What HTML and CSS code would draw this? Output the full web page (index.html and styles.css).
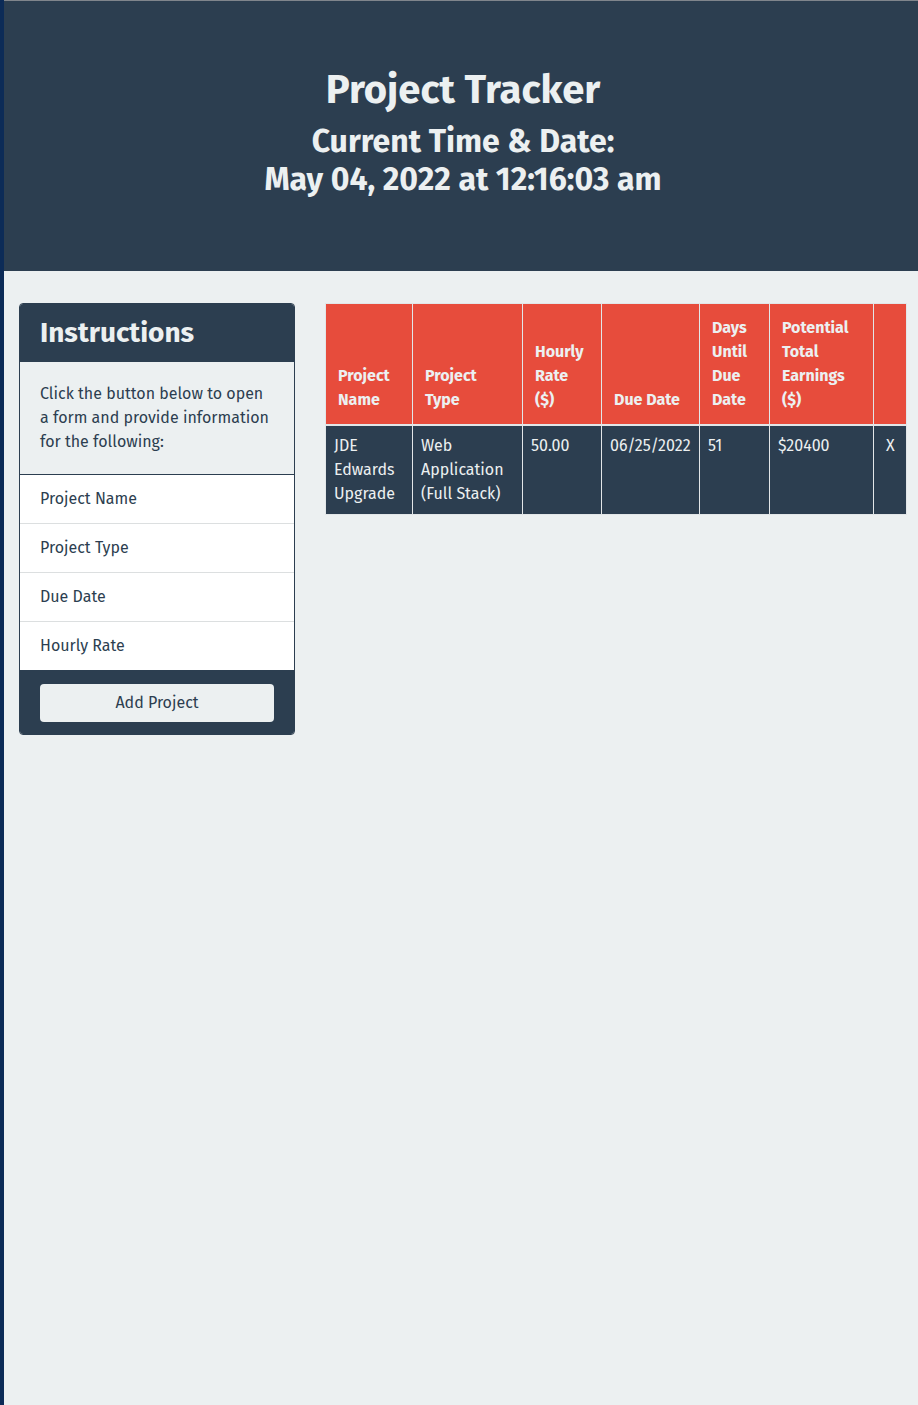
FILE: index.html
```html
<!DOCTYPE html>
<html lang="en">
<head>
<meta charset="utf-8">
<title>Project Tracker</title>
<link rel="stylesheet" href="styles.css">
</head>
<body>
<header class="hero">
  <h1 class="hero-title">Project Tracker</h1>
  <h2 class="hero-sub">Current Time &amp; Date:<br>May 04, 2022 at 12:16:03 am</h2>
</header>
<main class="main">
  <aside class="card">
    <div class="card-header">
      <h3 class="card-title">Instructions</h3>
    </div>
    <div class="card-body">
      <p class="card-text">Click the button below to open a form and provide information for the following:</p>
    </div>
    <ul class="list">
      <li class="list-item">Project Name</li>
      <li class="list-item">Project Type</li>
      <li class="list-item">Due Date</li>
      <li class="list-item">Hourly Rate</li>
    </ul>
    <div class="card-footer">
      <button class="btn" type="button">Add Project</button>
    </div>
  </aside>
  <section class="table-wrap">
    <table class="table">
      <colgroup>
        <col class="c-name">
        <col class="c-type">
        <col class="c-rate">
        <col class="c-due">
        <col class="c-days">
        <col class="c-earn">
        <col class="c-del">
      </colgroup>
      <thead>
        <tr>
          <th>Project Name</th>
          <th>Project Type</th>
          <th>Hourly Rate ($)</th>
          <th>Due Date</th>
          <th>Days Until Due Date</th>
          <th>Potential Total Earnings ($)</th>
          <th></th>
        </tr>
      </thead>
      <tbody>
        <tr>
          <td>JDE Edwards Upgrade</td>
          <td>Web Application (Full Stack)</td>
          <td>50.00</td>
          <td class="nowrap">06/25/2022</td>
          <td>51</td>
          <td>$20400</td>
          <td class="del">X</td>
        </tr>
      </tbody>
    </table>
  </section>
</main>
</body>
</html>
```
FILE: styles.css
```css
* { box-sizing: border-box; }

html { background: #ecf0f1; }

body {
  margin: 0;
  min-height: 1405px;
  background: #ecf0f1;
  border-left: 4px solid #0c2b57;
  font-family: "Fira Sans", Roboto, "Liberation Sans", sans-serif;
  font-size: 16px;
  line-height: 24px;
  color: #2c3e50;
}

.hero {
  background: #2c3e50;
  color: #ecf0f1;
  text-align: center;
  border-top: 1px solid #80858c;
  padding: 65px 32px 64px 36px;
}

.hero-title {
  margin: 0 0 8px;
  font-size: 40px;
  line-height: 1.2;
  font-weight: 700;
}

.hero-sub {
  margin: 0 0 8px;
  font-size: 32px;
  line-height: 1.2;
  font-weight: 700;
}

.main {
  display: flex;
  align-items: flex-start;
  gap: 30px;
  padding: 32px 12px 0 15px;
}

.card {
  flex: 0 0 276px;
  width: 276px;
  border: 1px solid #2c3e50;
  border-radius: 4px;
  overflow: hidden;
  background: #fff;
}

.card-header {
  background: #2c3e50;
  padding: 12px 20px;
  border-bottom: 1px solid #2c3e50;
}

.card-title {
  margin: 0;
  font-size: 28px;
  line-height: 33px;
  font-weight: 700;
  color: #ecf0f1;
}

.card-body {
  background: #ecf0f1;
  padding: 20px;
  border-bottom: 1px solid #2c3e50;
}

.card-text { margin: 0; }

.list {
  list-style: none;
  margin: 0;
  padding: 0;
  background: #fff;
}

.list-item {
  padding: 12px 20px;
  border-bottom: 1px solid #dcdfe0;
}

.list-item:last-child { border-bottom: none; }

.card-footer {
  background: #2c3e50;
  padding: 14px 20px 12px;
}

.btn {
  display: block;
  width: 100%;
  height: 38px;
  border: none;
  border-radius: 4px;
  background: #ecf0f1;
  color: #2c3e50;
  font-family: inherit;
  font-size: 16px;
  line-height: 24px;
  padding: 6px 12px;
}

.table-wrap { flex: 0 0 581px; }

.table {
  width: 581px;
  border-collapse: collapse;
  table-layout: fixed;
  border: 1px solid #e2e6e8;
}

.c-name { width: 87px; }
.c-type { width: 110px; }
.c-rate { width: 79px; }
.c-due { width: 98px; }
.c-days { width: 70px; }
.c-earn { width: 104px; }
.c-del { width: 33px; }

.table th {
  background: #e74c3c;
  color: #ecf0f1;
  font-weight: 700;
  text-align: left;
  vertical-align: bottom;
  padding: 12px;
  border: 1px solid #e2e6e8;
  border-bottom-width: 2px;
}

.table td {
  background: #2c3e50;
  color: #ecf0f1;
  vertical-align: top;
  padding: 8px;
  border: 1px solid #e2e6e8;
}

.table td.nowrap { white-space: nowrap; }

.table td.del { padding: 8px 12px; }
```
